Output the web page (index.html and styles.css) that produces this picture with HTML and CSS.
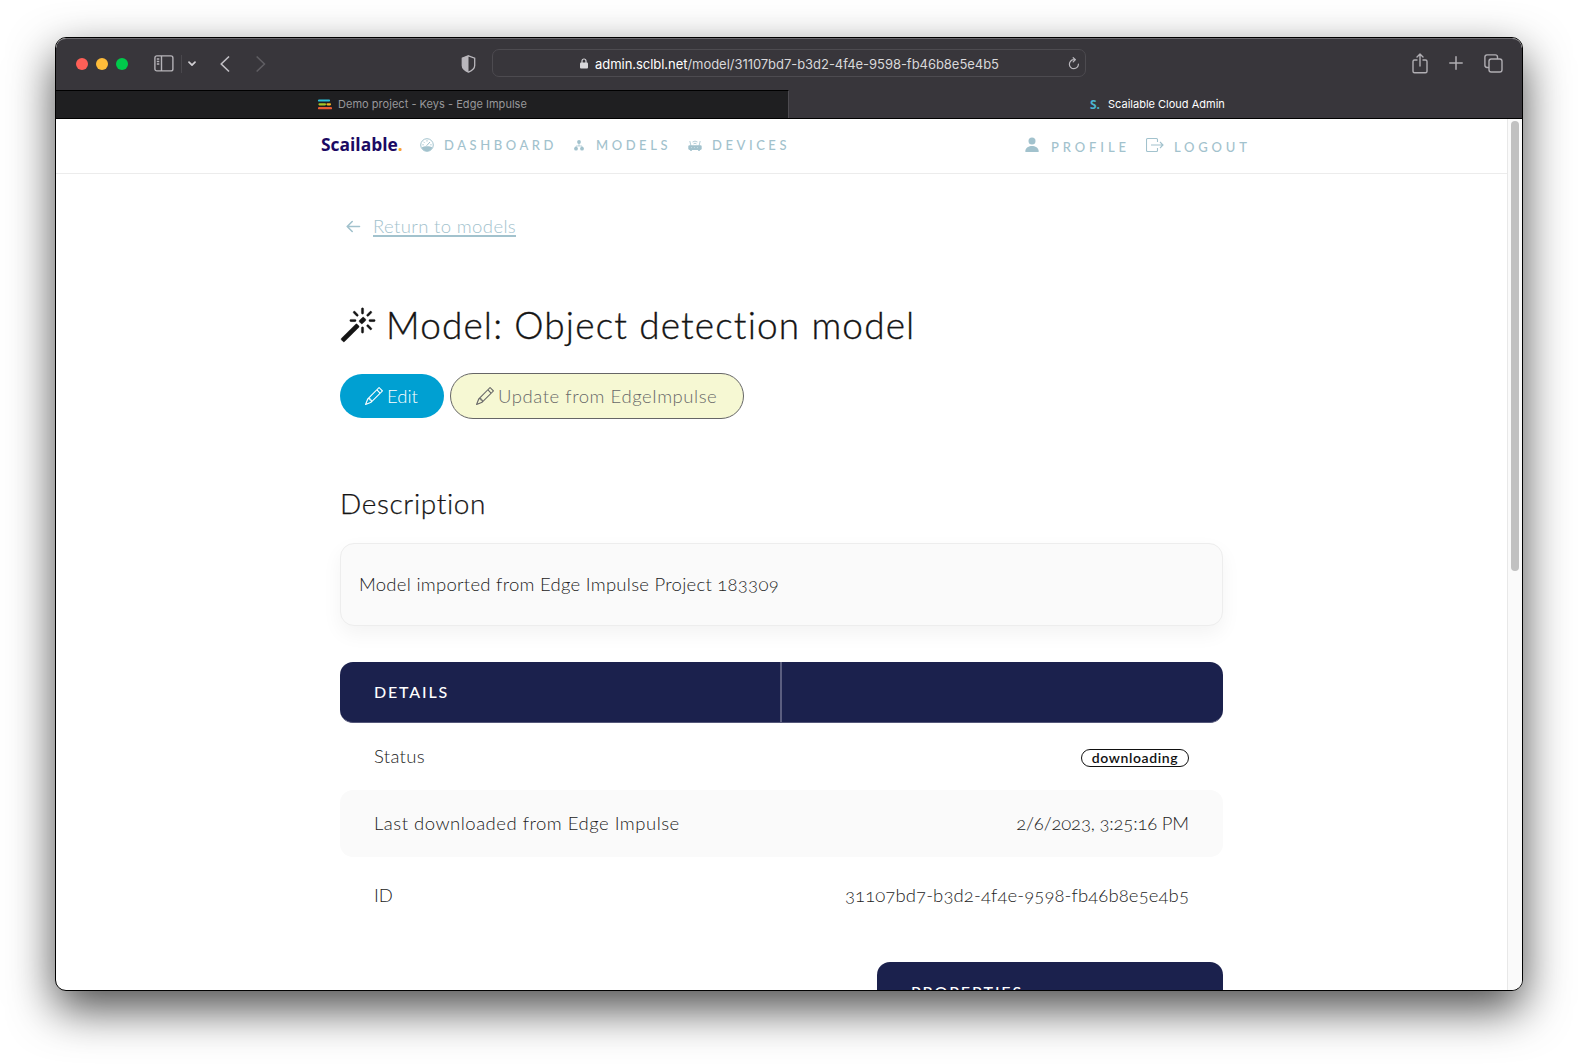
FILE: index.html
```html
<!DOCTYPE html>
<html lang="en">
<head>
<meta charset="utf-8">
<title>Scailable Cloud Admin</title>
<link rel="stylesheet" href="styles.css">
</head>
<body>
<div class="window">
  <header class="toolbar">
    <div class="tools-left">
      <i class="light red"></i><i class="light yellow"></i><i class="light green"></i>
      <svg class="ic-sidebar" width="20" height="17" viewBox="0 0 20 17" fill="none" stroke="#b5b3b8" stroke-width="1.4"><rect x=".9" y=".9" width="18" height="15" rx="2"/><path d="M7.5 1v15M2.8 4h2.5M2.8 6.500h2.500M2.800 9h2.500"/></svg>
      <i class="divider"></i>
      <svg class="ic-down" width="8" height="6" viewBox="0 0 8 6" fill="none" stroke="#d0ced2" stroke-width="1.7" stroke-linecap="round" stroke-linejoin="round"><path d="M1 1.200l3 3 3-3"/></svg>
      <svg class="ic-back" width="10" height="16" viewBox="0 0 10 16" fill="none" stroke="#c0bec3" stroke-width="1.700" stroke-linecap="round" stroke-linejoin="round"><path d="M8.500 1L1.200 8l7.300 7"/></svg>
      <svg class="ic-fwd" width="10" height="16" viewBox="0 0 10 16" fill="none" stroke="#5f5d62" stroke-width="1.700" stroke-linecap="round" stroke-linejoin="round"><path d="M1.200 1l7.300 7-7.300 7"/></svg>
    </div>
    <svg class="ic-shield" width="15" height="18" viewBox="0 0 15 18"><path d="M7.500.8l6.200 2.300v7.300c0 2.900-3.200 5.300-6.200 6.700-3-1.400-6.200-3.800-6.200-6.700V3.100z" fill="none" stroke="#b9b7bc" stroke-width="1.300"/><path d="M7.500.8v16.300c-3-1.400-6.200-3.800-6.200-6.700V3.100z" fill="#b9b7bc"/></svg>
    <div class="address">
      <svg class="ic-lock" width="8" height="11" viewBox="0 0 8 11"><path d="M2 5V3a2 2 0 014 0v2" fill="none" stroke="#d8d7da" stroke-width="1.200"/><rect y="4.600" width="8" height="6" rx="1" fill="#d8d7da"/></svg>
      <span class="url"><b>admin.sclbl.net</b>/model/31107bd7-b3d2-4f4e-9598-fb46b8e5e4b5</span>
      <svg class="ic-reload" width="12" height="13" viewBox="0 0 12 13" fill="none" stroke="#b9b7bc" stroke-width="1.200" stroke-linecap="round" stroke-linejoin="round"><path d="M10.400 7.200A4.500 4.500 0 116 2.700h1.400M5.200.7l2.200 2-2.200 2.200"/></svg>
    </div>
    <div class="tools-right">
      <svg width="16" height="21" viewBox="0 0 16 21" fill="none" stroke="#b0aeb3" stroke-width="1.400" stroke-linecap="round" stroke-linejoin="round"><path d="M5 7H2.500A1.500 1.500 0 001 8.500v9.800a1.500 1.500 0 001.500 1.500h11a1.500 1.500 0 001.500-1.500V8.500A1.500 1.500 0 0013.500 7H11M8 13V1M5 3.900L8 1l3 2.900"/></svg>
      <svg class="ic-plus" width="14" height="14" viewBox="0 0 14 14" stroke="#b0aeb3" stroke-width="1.500" stroke-linecap="round"><path d="M7 .8v12.400M.8 7h12.400"/></svg>
      <svg width="19" height="19" viewBox="0 0 19 19" fill="none" stroke="#b0aeb3" stroke-width="1.400"><rect x="5" y="5" width="13" height="13" rx="2.200"/><path d="M5 13.500H3A2.200 2.200 0 01.900 11.300V3A2.200 2.200 0 013 .9h8.300A2.200 2.200 0 0113.500 3v2"/></svg>
    </div>
  </header>
  <div class="tabs">
    <div class="tab idle">
      <svg width="14" height="11" viewBox="0 0 14 11" stroke-width="2.200" stroke-linecap="round"><path d="M1 1.500h10" stroke="#2cc0d8"/><path d="M1.500 5.300h5.500" stroke="#a6c626"/><path d="M9.500 5.300h2.500" stroke="#f0b323"/><path d="M1 9.200h12" stroke="#ea5b34"/></svg>
      <span>Demo project - Keys - Edge Impulse</span>
    </div>
    <div class="tab active"><b class="fav">S.</b><span>Scailable Cloud Admin</span></div>
  </div>
  <div class="viewport">
    <div class="page">
      <nav class="nav">
        <a class="brand">Scailable<i>.</i></a>
        <a class="item dash"><svg width="14" height="14" viewBox="0 0 14 14"><circle cx="7" cy="7" r="6.300" fill="none" stroke="#a2c2cd"/><path d="M1.500 9.500C4 7.800 10 7.800 12.500 9.500A6.300 6.300 0 017 13.300 6.300 6.300 0 011.500 9.500z" fill="#a2c2cd"/><path d="M6.500 7.800L10 4M7 2.200v1.300M3.500 3.800l.9.900M2.400 6.800h1.300M10.300 6.800h1.300" stroke="#a2c2cd"/></svg><span>DASHBOARD</span></a>
        <a class="item mods"><svg width="10" height="11" viewBox="0 0 10 11" fill="#a2c2cd"><circle cx="5" cy="2" r="1.900"/><circle cx="2" cy="8.700" r="1.900"/><circle cx="8" cy="8.700" r="1.900"/><path d="M5 3v3M2 8V6h6v2" fill="none" stroke="#a2c2cd" stroke-width=".7"/></svg><span>MODELS</span></a>
        <a class="item devs"><svg width="14" height="11" viewBox="0 0 14 11"><rect x=".3" y="5.300" width="13.400" height="4.600" rx="1.300" fill="#a2c2cd"/><path d="M2 10.300h2M10 10.300h2" stroke="#a2c2cd"/><path d="M3 6L1.800 1M11 6l1.200-5M4.500 2q2.500-1.800 5 0M5.500 3.800q1.500-1.200 3 0" fill="none" stroke="#a2c2cd" stroke-width=".8"/><path d="M3 7.600h1M6 7.600h1M9 7.600h1" stroke="#fff" stroke-width=".4"/></svg><span>DEVICES</span></a>
        <a class="item prof"><svg width="14" height="16" viewBox="0 0 14 16" fill="#a2c2cd"><circle cx="7" cy="4" r="3.500"/><path d="M.3 14.500C.3 10.500 4 9 7 9s6.700 1.500 6.700 5.500q0 .5-.5.500H.8q-.5 0-.5-.5z"/></svg><span>PROFILE</span></a>
        <a class="item logo"><svg width="18" height="16" viewBox="0 0 18 16" fill="none" stroke="#a2c2cd" stroke-width="1.100"><path d="M11.500 5V2.500a1 1 0 00-1-1h-9a1 1 0 00-1 1v11a1 1 0 001 1h9a1 1 0 001-1V11M5 8h12M14 5l3 3-3 3"/></svg><span>LOGOUT</span></a>
      </nav>
      <main class="content">
        <a class="return"><svg width="15" height="13" viewBox="0 0 15 13" fill="none" stroke="#a2c2cd" stroke-width="1.600" stroke-linecap="round" stroke-linejoin="round"><path d="M13.500 6.500H1.200M6.200 1.500L1.200 6.500l5 5"/></svg><span>Return to models</span></a>
        <h1><svg width="36" height="36" viewBox="0 0 16 16" fill="#141414" stroke="#141414" stroke-width=".15"><path d="M9.500 2.672a.5.500 0 101 0V.843a.5.500 0 00-1 0v1.829zm4.500.035A.5.500 0 0013.293 2L12 3.293a.5.500 0 10.707.707L14 2.707zM7.293 4A.5.500 0 108 3.293L6.707 2A.5.500 0 006 2.707L7.293 4zm-.621 2.500a.5.500 0 100-1H4.843a.5.500 0 100 1h1.829zm8.485 0a.5.500 0 100-1h-1.829a.5.500 0 000 1h1.829zM13.293 10A.5.500 0 1014 9.293L12.707 8a.5.500 0 10-.707.707L13.293 10zM9.500 11.157a.5.500 0 001 0V9.328a.5.500 0 00-1 0v1.829zm1.854-5.097a.5.500 0 000-.706l-.708-.708a.5.500 0 00-.707 0L8.646 5.940a.5.500 0 000 .707l.708.708a.5.500 0 00.707 0l1.293-1.293zm-3 3a.5.500 0 000-.706l-.708-.708a.5.500 0 00-.707 0L.646 13.940a.5.500 0 000 .707l.707.707a.5.500 0 00.707 0L8.354 9.060z"/></svg><span>Model: Object detection model</span></h1>
        <div class="actions">
          <a class="btn edit"><svg class="pen" width="18" height="18" viewBox="0 0 16 16" fill="currentColor"><path d="M12.146.146a.5.500 0 01.708 0l3 3a.5.500 0 010 .708l-10 10a.5.500 0 01-.168.110l-5 2a.5.500 0 01-.650-.650l2-5a.5.500 0 01.110-.168l10-10zM11.207 2.500L13.500 4.793 14.793 3.500 12.500 1.207 11.207 2.500zm1.586 3L10.500 3.207 4 9.707V10h.5a.5.500 0 01.5.500v.5h.5a.5.500 0 01.5.500v.5h.293l6.500-6.500zm-9.761 5.175l-.106.106-1.528 3.821 3.821-1.528.106-.106A.5.500 0 015 12.500V12h-.5a.5.500 0 01-.5-.5V11h-.5a.5.500 0 01-.468-.325z"/></svg><span>Edit</span></a>
          <a class="btn update"><svg class="pen" width="18" height="18" viewBox="0 0 16 16" fill="currentColor"><path d="M12.146.146a.5.500 0 01.708 0l3 3a.5.500 0 010 .708l-10 10a.5.500 0 01-.168.110l-5 2a.5.500 0 01-.650-.650l2-5a.5.500 0 01.110-.168l10-10zM11.207 2.500L13.500 4.793 14.793 3.500 12.500 1.207 11.207 2.500zm1.586 3L10.500 3.207 4 9.707V10h.5a.5.500 0 01.5.500v.5h.5a.5.500 0 01.5.500v.5h.293l6.500-6.500zm-9.761 5.175l-.106.106-1.528 3.821 3.821-1.528.106-.106A.5.500 0 015 12.500V12h-.5a.5.500 0 01-.5-.5V11h-.5a.5.500 0 01-.468-.325z"/></svg><span>Update from EdgeImpulse</span></a>
        </div>
        <h2><span>Description</span></h2>
        <div class="card"><span>Model imported from Edge Impulse Project 183309</span></div>
        <div class="thead"><div class="th"><span>DETAILS</span></div><div class="th"></div></div>
        <div class="row status"><span class="k1">Status</span><span class="badge"><span>downloading</span></span></div>
        <div class="row shaded"><span class="k2">Last downloaded from Edge Impulse</span><span class="v2">2/6/2023, 3:25:16 PM</span></div>
        <div class="row id"><span class="k3">ID</span><span class="v3">31107bd7-b3d2-4f4e-9598-fb46b8e5e4b5</span></div>
        <div class="props"><span>PROPERTIES</span></div>
      </main>
    </div>
    <div class="scroll"><i></i></div>
  </div>
</div>
</body>
</html>
```
FILE: styles.css
```css
* { box-sizing: border-box; }
body { margin: 0; width: 1578px; height: 1064px; overflow: hidden; background: #fff; padding: 37px 0 0 55px; font-family: Lato, sans-serif; }
svg { display: block; flex: none; }
.window { width: 1468px; height: 954px; border: 1px solid #000; border-radius: 11px; overflow: hidden; background: #fff; box-shadow: 0 18px 46px rgba(0,0,0,.7); display: flex; flex-direction: column; }
.toolbar { height: 52px; flex: none; background: #38363b; border-top: 1px solid #6b696e; border-radius: 10px 10px 0 0; display: flex; align-items: center; padding-bottom: 2px; font-family: Inter, sans-serif; }
.tools-left { display: flex; align-items: center; width: 405px; padding-left: 20px; }
.light { width: 12px; height: 12px; border-radius: 50%; margin-right: 8px; }
.red { background: #ff5f57; }
.yellow { background: #febc3a; }
.green { background: #00ca4b; }
.ic-sidebar { margin-left: 18px; }
.divider { width: 1px; height: 18px; background: #4a484d; margin-left: 7px; }
.ic-down { margin-left: 6px; }
.ic-back { margin-left: 24px; }
.ic-fwd { margin-left: 26px; }
.address { margin: -1px 0 0 16px; width: 594px; height: 28px; border: 1px solid #4d4b50; border-radius: 7px; display: flex; align-items: center; padding: 1px 5px 0 87px; }
.ic-lock { margin: -1px 7px 0 0; }
.url { font-size: 13px; color: #d9d8da; white-space: nowrap; letter-spacing: -.04px; }
.url b { font-weight: 400; color: #fff; }
.ic-reload { margin-left: auto; }
.tools-right { margin: -1px 0 0 auto; display: flex; align-items: center; gap: 21px; padding-right: 19px; }
.tabs { height: 29px; flex: none; display: flex; background: #38363b; border-bottom: 1px solid #000; font: 11px Inter, sans-serif; }
.tab { display: flex; align-items: center; white-space: nowrap; }
.idle { width: 733px; background: #1f1f21; border-top: 1px solid #000; border-right: 1px solid #4d4b50; color: #98979a; padding: 0 0 1px 262px; gap: 6px; letter-spacing: .03px; }
.active { padding-left: 301px; gap: 8px; color: #fff; }
.fav { color: #4bb4d0; font: bold 12px "Open Sans", sans-serif; }
.viewport { flex: 1; display: flex; min-height: 0; }
.page { width: 1451px; overflow: hidden; }
.scroll { flex: 1; background: #fafafa; border-left: 1px solid #e8e8e8; padding: 2px 0 0 3px; }
.scroll i { display: block; width: 8px; height: 450px; border-radius: 4px; background: #c1c1c1; }
.nav { height: 55px; border-bottom: 1px solid #ececec; display: flex; padding: 0 0 0 265px; color: #a2c2cd; }
.brand { font: bold 17.400px/50px "Open Sans", sans-serif; color: #1b0a63; width: 99px; }
.brand i { color: #f9a826; font-style: normal; }
.item { display: flex; align-items: center; font: 500 13px/20px Lato, sans-serif; height: 52px; white-space: nowrap; letter-spacing: 3.550px; }
.dash { width: 154px; gap: 10px; }
.mods { width: 114px; gap: 12px; }
.devs { width: 337px; gap: 10px; }
.prof { width: 121px; gap: 12px; letter-spacing: 3.900px; }
.logo { gap: 10px; letter-spacing: 3.800px; }
.prof, .logo { height: 56px; }
.dash span, .mods span, .devs span { margin-top: -1px; }
.prof svg, .logo svg { margin-top: -4px; }
.content { width: 883px; margin-left: 284px; color: #222; font-weight: 300; font-size: 18.500px; }
.return { display: flex; align-items: center; gap: 12px; height: 24px; margin-top: 40px; padding-left: 6px; color: #a2c2cd; letter-spacing: .37px; }
.return span { line-height: 23px; border-bottom: 2px solid #a2c2cd; white-space: nowrap; height: 22px; }
h1, h2 { margin: 0; color: #141414; white-space: nowrap; font-weight: 300; -webkit-text-stroke: .35px #141414; }
h1 { display: flex; gap: 10px; align-items: center; height: 50px; margin-top: 62px; font-size: 37px; letter-spacing: 1.130px; }
h1 span { margin-top: -2px; }
.actions { display: flex; align-items: center; gap: 6px; height: 46px; margin-top: 23px; }
.btn { display: flex; align-items: center; gap: 4px; height: 44px; border-radius: 22px; padding-left: 25px; padding-bottom: 1px; white-space: nowrap; }
.edit { width: 104px; background: #00a0d2; color: #fff; }
.update { width: 294px; height: 46px; border: 1px solid #666; border-radius: 23px; background: #f6f8d3; color: #686868; letter-spacing: .55px; }
h2 { height: 40px; line-height: 38px; margin-top: 65px; font-size: 28px; letter-spacing: .65px; -webkit-text-stroke-width: .25px; }
.card { height: 83px; margin-top: 19px; border: 1px solid #ededed; border-radius: 14px; background: #fafafa; padding: 0 18px 2px; display: flex; align-items: center; letter-spacing: .27px; box-shadow: 0 8px 20px rgba(0,0,0,.05); }
.thead { height: 61px; margin-top: 36px; border-radius: 13px; background: #1b214d; border-bottom: 1px solid #545779; display: flex; overflow: hidden; }
.th { width: 442px; border-right: 2px solid #5b5e80; padding: 0 0 1px 34px; display: flex; align-items: center; color: #fff; font-size: 16px; font-weight: 500; letter-spacing: 1.850px; }
.th + .th { border: 0; }
.row { display: flex; justify-content: space-between; align-items: center; height: 67px; padding: 0 34px 2px; border-radius: 13px; white-space: nowrap; }
.shaded { background: #fafafa; }
.id { height: 76px; padding-bottom: 0; }
.k1 { letter-spacing: .3px; }
.k2 { letter-spacing: .5px; }
.badge { width: 108px; height: 18px; border: 1px solid #111; border-radius: 9px; display: flex; align-items: center; justify-content: center; color: #111; font-size: 14px; font-weight: 600; letter-spacing: .6px; margin-top: 4px; }
.v2, .v3 { font-feature-settings: "onum"; }
.v2 { letter-spacing: -.18px; }
.v3 { letter-spacing: .11px; }
.card span { font-feature-settings: "onum"; }
.props { width: 346px; height: 61px; margin: 29px 0 0 auto; border-radius: 13px; background: #1b214d; color: #fff; padding: 0 0 2px 34px; display: flex; align-items: center; font-size: 16px; font-weight: 500; letter-spacing: 1.900px; }
```
